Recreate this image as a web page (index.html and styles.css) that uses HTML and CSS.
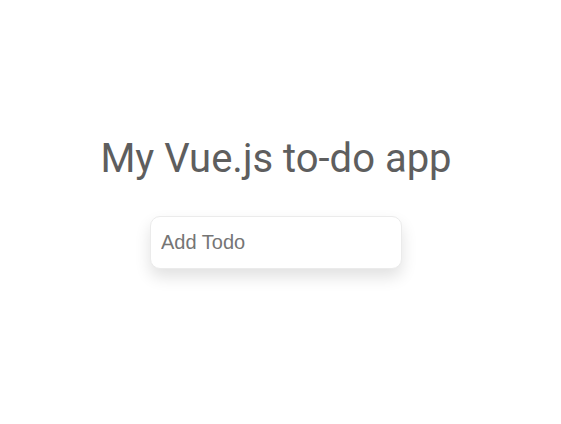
FILE: index.html
```html
<!DOCTYPE html>
<html lang="en">
<head>
<meta charset="utf-8">
<title>My Vue.js to-do app</title>
<link rel="stylesheet" href="styles.css">
</head>
<body>
<main class="app">
  <h1 class="title">My Vue.js to-do app</h1>
  <input class="todo-input" type="text" placeholder="Add Todo">
</main>
</body>
</html>
```
FILE: styles.css
```css
html, body {
  margin: 0;
  background: #ffffff;
}
body {
  font-family: Roboto, "Liberation Sans", sans-serif;
}
.app {
  width: 552px;
  display: flex;
  flex-direction: column;
  align-items: center;
  padding-top: 135px;
  padding-bottom: 60px;
}
.title {
  margin: 0;
  font-size: 40px;
  font-weight: 400;
  line-height: 47px;
  color: #5e5e5e;
}
.todo-input {
  margin-top: 34px;
  width: 252px;
  height: 53px;
  box-sizing: border-box;
  border: 1px solid #ebebeb;
  border-radius: 10px;
  padding: 0 10px;
  font-family: "Liberation Sans", Arial, sans-serif;
  font-size: 20px;
  color: #555;
  box-shadow: 0 8px 16px rgba(0, 0, 0, 0.12);
  outline: none;
}
.todo-input::placeholder {
  color: #757575;
}
```
